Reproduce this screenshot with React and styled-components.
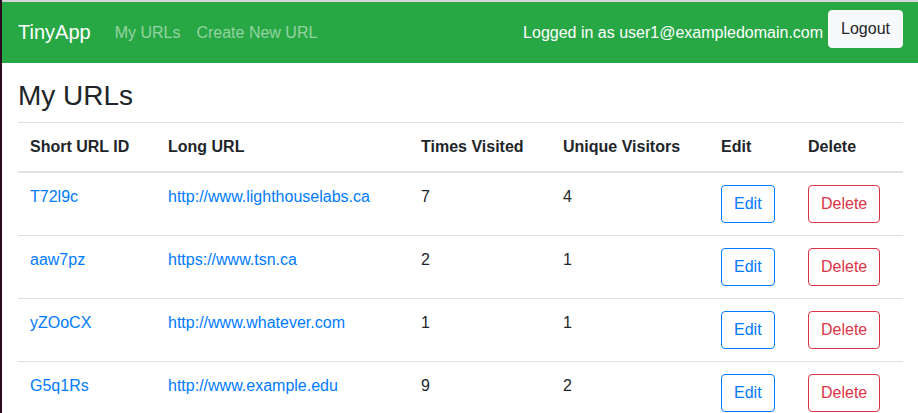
import React from "react";
import styled, { createGlobalStyle } from "styled-components";

const GlobalStyle = createGlobalStyle`
  html, body {
    margin: 0;
    padding: 0;
    overflow: hidden;
    background: #ffffff;
    font-family: "Liberation Sans", Arial, sans-serif;
    font-size: 16px;
    color: #212529;
  }
  * {
    box-sizing: border-box;
  }
`;

const Frame = styled.div`
  min-height: 413px;
  border-left: 2px solid #2c0a1f;
`;

const NavBar = styled.nav`
  display: flex;
  align-items: center;
  height: 63px;
  padding: 0 15px 0 16px;
  background-color: #28a745;
  border-top: 2px solid #d6d6d6;
`;

const Brand = styled.span`
  font-size: 20px;
  color: #ffffff;
  margin-right: 16px;
`;

const NavLink = styled.a`
  color: rgba(255, 255, 255, 0.5);
  padding: 0 8px;
  text-decoration: none;
`;

const NavRight = styled.div`
  margin-left: auto;
  display: flex;
  align-items: center;
  gap: 5px;
`;

const LoggedIn = styled.span`
  color: #ffffff;
`;

const LogoutButton = styled.button`
  font-family: inherit;
  font-size: 16px;
  line-height: 24px;
  padding: 6px 12px;
  margin-bottom: 7px;
  color: #212529;
  background-color: #f8f9fa;
  border: 1px solid #f8f9fa;
  border-radius: 4px;
`;

const Container = styled.main`
  padding: 0 15px 0 16px;
`;

const Title = styled.h3`
  font-size: 28px;
  font-weight: 400;
  line-height: 1.2;
  margin: 16px 0 9px;
`;

const Table = styled.table`
  width: 885px;
  table-layout: fixed;
  border-collapse: collapse;
`;

const HeadCell = styled.th`
  box-sizing: content-box;
  width: ${(p) => p.$w - 24}px;
  text-align: left;
  font-weight: 700;
  line-height: 24px;
  padding: 12px;
  border-top: 1px solid #dee2e6;
  border-bottom: 2px solid #dee2e6;
  vertical-align: bottom;
`;

const Cell = styled.td`
  line-height: 24px;
  padding: 12px;
  border-top: 1px solid #dee2e6;
  vertical-align: top;
`;

const CellLink = styled.a`
  color: #007bff;
  text-decoration: none;
`;

const OutlineButton = styled.button`
  font-family: inherit;
  font-size: 16px;
  line-height: 24px;
  padding: 6px 12px;
  background: transparent;
  color: ${(p) => (p.$danger ? "#dc3545" : "#007bff")};
  border: 1px solid ${(p) => (p.$danger ? "#dc3545" : "#007bff")};
  border-radius: 4px;
`;

const urls = [
  { id: "T72l9c", long: "http://www.lighthouselabs.ca", visits: 7, unique: 4 },
  { id: "aaw7pz", long: "https://www.tsn.ca", visits: 2, unique: 1 },
  { id: "yZOoCX", long: "http://www.whatever.com", visits: 1, unique: 1 },
  { id: "G5q1Rs", long: "http://www.example.edu", visits: 9, unique: 2 },
];

export default function App() {
  return (
    <>
      <GlobalStyle />
      <Frame>
        <NavBar>
          <Brand>TinyApp</Brand>
          <NavLink href="#">My URLs</NavLink>
          <NavLink href="#">Create New URL</NavLink>
          <NavRight>
            <LoggedIn>Logged in as user1@exampledomain.com</LoggedIn>
            <LogoutButton>Logout</LogoutButton>
          </NavRight>
        </NavBar>
        <Container>
          <Title>My URLs</Title>
          <Table>
            <thead>
              <tr>
                <HeadCell $w={138}>Short URL ID</HeadCell>
                <HeadCell $w={253}>Long URL</HeadCell>
                <HeadCell $w={142}>Times Visited</HeadCell>
                <HeadCell $w={158}>Unique Visitors</HeadCell>
                <HeadCell $w={87}>Edit</HeadCell>
                <HeadCell $w={107}>Delete</HeadCell>
              </tr>
            </thead>
            <tbody>
              {urls.map((url) => (
                <tr key={url.id}>
                  <Cell>
                    <CellLink href="#">{url.id}</CellLink>
                  </Cell>
                  <Cell>
                    <CellLink href="#">{url.long}</CellLink>
                  </Cell>
                  <Cell>{url.visits}</Cell>
                  <Cell>{url.unique}</Cell>
                  <Cell>
                    <OutlineButton>Edit</OutlineButton>
                  </Cell>
                  <Cell>
                    <OutlineButton $danger>Delete</OutlineButton>
                  </Cell>
                </tr>
              ))}
            </tbody>
          </Table>
        </Container>
      </Frame>
    </>
  );
}
